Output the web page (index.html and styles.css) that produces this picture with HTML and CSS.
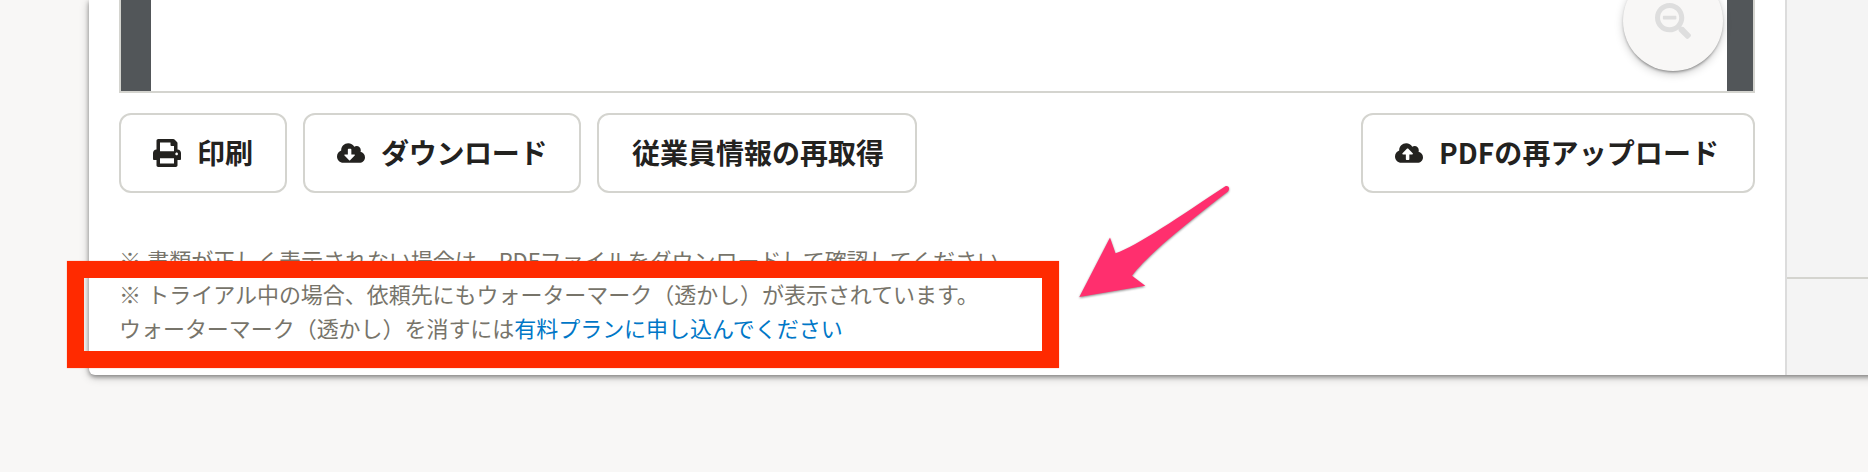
FILE: index.html
```html
<!DOCTYPE html>
<html lang="ja">
<head>
<meta charset="utf-8">
<title>書類プレビュー</title>
<link rel="stylesheet" href="styles.css">
</head>
<body>
<div class="card">
  <main class="main">
    <div class="preview">
      <div class="page"></div>
      <button class="zoom-out" aria-label="縮小">
        <svg class="zoom-icon" viewBox="0 0 512 512"><path d="M304 192v32c0 6.600-5.400 12-12 12H124c-6.600 0-12-5.400-12-12v-32c0-6.600 5.400-12 12-12h168c6.600 0 12 5.400 12 12zm201 284.700L476.700 505c-9.400 9.400-24.600 9.400-33.900 0L343 405.300c-4.500-4.500-7-10.600-7-17V372c-35.300 27.600-79.700 44-128 44C93.100 416 0 322.900 0 208S93.100 0 208 0s208 93.100 208 208c0 48.300-16.400 92.700-44 128h16.300c6.400 0 12.500 2.500 17 7l99.700 99.700c9.300 9.400 9.300 24.600 0 34zM344 208c0-75.200-60.800-136-136-136S72 132.800 72 208s60.800 136 136 136 136-60.800 136-136z"/></svg>
      </button>
    </div>
    <div class="actions">
      <button class="btn print"><svg class="icon" viewBox="0 0 512 512"><path d="M448 192V77.250c0-8.490-3.370-16.620-9.370-22.630L393.370 9.370c-6-6-14.140-9.370-22.630-9.370H96C78.330 0 64 14.330 64 32v160c-35.350 0-64 28.650-64 64v112c0 8.840 7.160 16 16 16h48v96c0 17.670 14.330 32 32 32h320c17.670 0 32-14.330 32-32v-96h48c8.840 0 16-7.160 16-16V256c0-35.350-28.650-64-64-64zm-64 256H128v-96h256v96zm0-224H128V64h192v48c0 8.840 7.160 16 16 16h48v96zm48 72c-13.250 0-24-10.750-24-24 0-13.260 10.750-24 24-24s24 10.740 24 24c0 13.250-10.750 24-24 24z"/></svg><span>印刷</span></button>
      <button class="btn download"><svg class="icon" viewBox="0 0 640 512"><path d="M537.600 226.600c4.100-10.700 6.400-22.400 6.400-34.600 0-53-43-96-96-96-19.700 0-38.100 6-53.300 16.200C367 64.200 315.300 32 256 32c-88.400 0-160 71.600-160 160 0 2.700.1 5.400.2 8.100C40.200 219.800 0 273.200 0 336c0 79.500 64.500 144 144 144h368c70.700 0 128-57.300 128-128 0-61.900-44-113.600-102.400-125.400zm-132.900 88.700L299.300 420.700c-6.200 6.200-16.400 6.200-22.600 0L171.300 315.300c-10.100-10.100-2.900-27.300 11.300-27.300H248V176c0-8.800 7.200-16 16-16h48c8.800 0 16 7.200 16 16v112h65.400c14.200 0 21.400 17.200 11.300 27.300z"/></svg><span>ダウンロード</span></button>
      <button class="btn refetch"><span>従業員情報の再取得</span></button>
      <button class="btn upload"><svg class="icon" viewBox="0 0 640 512"><path d="M537.600 226.600c4.100-10.700 6.400-22.400 6.400-34.600 0-53-43-96-96-96-19.700 0-38.100 6-53.300 16.200C367 64.200 315.300 32 256 32c-88.400 0-160 71.600-160 160 0 2.700.1 5.400.2 8.100C40.200 219.800 0 273.200 0 336c0 79.500 64.500 144 144 144h368c70.700 0 128-57.300 128-128 0-61.900-44-113.600-102.400-125.400zM393.400 288H328v112c0 8.800-7.200 16-16 16h-48c-8.800 0-16-7.200-16-16V288h-65.400c-14.300 0-21.400-17.200-11.300-27.400l105.400-105.400c6.200-6.200 16.400-6.200 22.600 0l105.400 105.400c10.100 10.100 2.900 27.400-11.300 27.400z"/></svg><span>PDFの再アップロード</span></button>
    </div>
    <div class="notes">
      <p>※ 書類が正しく表示されない場合は、PDFファイルをダウンロードして確認してください。</p>
      <p>※ トライアル中の場合、依頼先にもウォーターマーク（透かし）が表示されています。</p>
      <p>ウォーターマーク（透かし）を消すには<a class="link" href="#">有料プランに申し込んでください</a></p>
    </div>
  </main>
  <aside class="side"><div class="side-top"></div></aside>
</div>
<div class="highlight"></div>
<svg class="arrow" viewBox="1070 175 170 135"><path d="M1079.300 297L1110 237.500L1115.500 253.200C1137 246 1180 216 1225 186.400C1228.500 185 1230.500 188.500 1228 191.500C1190 221 1149 253 1132 275.800L1145.300 285.700Z"/></svg>
</body>
</html>
```
FILE: styles.css
```css
* { box-sizing: border-box; }
body {
  margin: 0;
  height: 472px;
  padding-left: 89px;
  overflow: hidden;
  background: #f8f7f6;
  color: #23221f;
  font-family: "Noto Sans CJK JP", sans-serif;
}
.card {
  display: flex;
  width: 1850px;
  height: 375px;
  border-radius: 0 0 6px 6px;
  background: #fff;
  box-shadow: 0 2px 4px rgba(3, 3, 2, 0.35), 0 2px 10px rgba(3, 3, 2, 0.25);
}
.main { width: 1696px; padding: 0 30px; }
.preview {
  position: relative;
  height: 93px;
  padding: 0 26px 0 30px;
  border: solid #d4d4cf;
  border-width: 0 2px 2px;
  background: #525659;
}
.page { height: 100%; background: #fff; }
.zoom-out {
  position: absolute;
  right: 30px;
  bottom: 20px;
  width: 100px;
  height: 100px;
  padding: 0;
  border: 0;
  border-radius: 50%;
  background: #f8f7f6;
  box-shadow: 0 2px 3px -1px rgba(3, 3, 2, 0.4), 0 3px 10px -1px rgba(3, 3, 2, 0.25);
}
.zoom-icon { display: block; width: 36px; height: 36px; margin: 0 0 0 32px; fill: #dedede; }
.actions { display: flex; gap: 16px; padding-top: 20px; }
.btn {
  display: flex;
  align-items: center;
  gap: 16px;
  height: 80px;
  padding: 0 32px;
  border: 2px solid #d4d4cf;
  border-radius: 12px;
  background: #fff;
  color: inherit;
  font: 700 28px/1 "Noto Sans CJK JP", sans-serif;
  white-space: nowrap;
}
.btn span { padding-bottom: 3px; }
.icon { flex: none; width: 28px; height: 28px; fill: currentColor; }
.print { width: 168px; }
.download { width: 278px; }
.download span { letter-spacing: -0.3px; }
.refetch { width: 320px; padding-left: 33px; padding-right: 31px; }
.upload { width: 394px; margin-left: auto; }
.upload span { letter-spacing: 0.1px; }
.notes { padding-top: 49px; color: #77746a; font-size: 22px; line-height: 34px; white-space: nowrap; }
.notes p { margin: 0; letter-spacing: -0.04px; word-spacing: 1.5px; }
.link { color: #0077c7; text-decoration: none; }
.side { flex: 1; border-left: 2px solid #dcdcdc; background: #f4f4f4; }
.side-top { height: 279px; border-bottom: 2px solid #d4d4cf; }
.highlight {
  position: absolute;
  left: 67px;
  top: 261px;
  width: 992px;
  height: 107px;
  border: 17px solid #ff2a00;
  box-shadow: 0 0 1px rgba(255, 42, 0, 0.5);
}
.arrow {
  position: absolute;
  left: 1070px;
  top: 175px;
  width: 170px;
  height: 135px;
  fill: #ff2f6e;
  filter: drop-shadow(0 1px 1px rgba(0, 0, 0, 0.45));
}
```
